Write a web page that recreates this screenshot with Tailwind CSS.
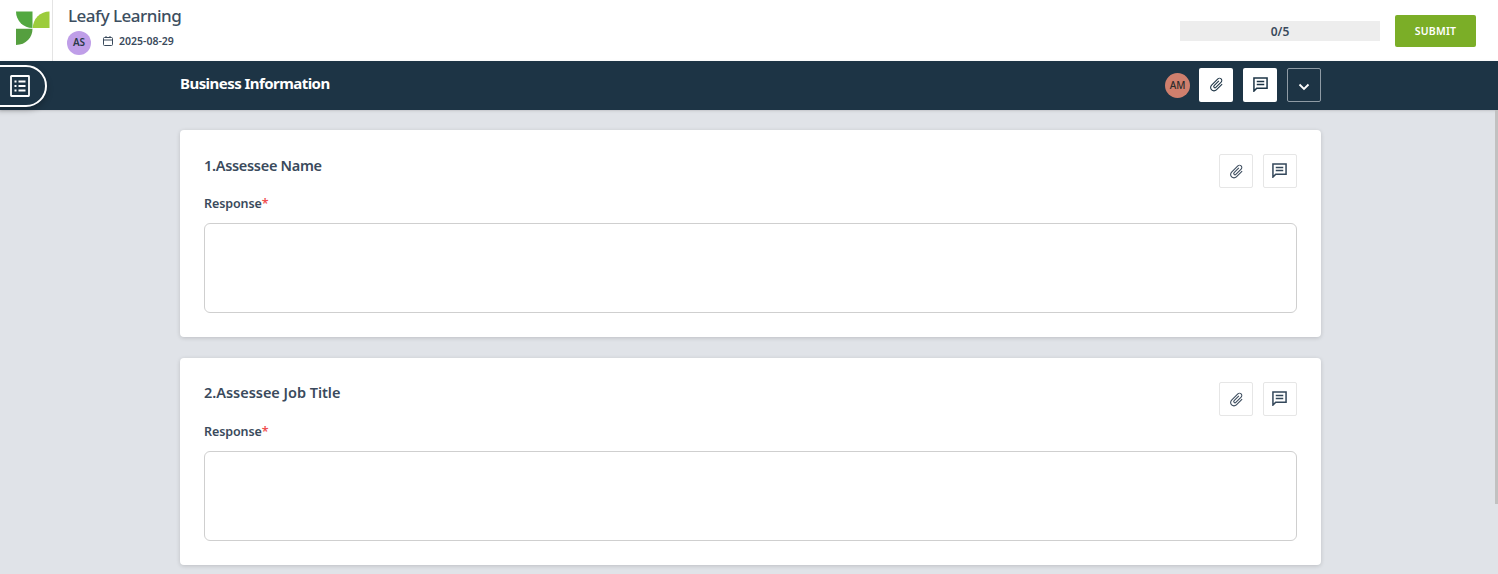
<!DOCTYPE html>
<html><head><meta charset="utf-8"><script src="https://cdn.jsdelivr.net/npm/@tailwindcss/browser@4"></script></head>
<body class="m-0">
<div class="w-[1498px] h-[574px] overflow-hidden flex flex-col bg-[#e0e3e8] font-['Noto_Sans',sans-serif] text-[#3a4a5c]">
  <header class="h-[61px] shrink-0 bg-white flex items-center">
    <div class="w-[53px] h-[61px] border-r border-[#e4e4e4] flex items-start pl-4 pt-[11px]">
      <svg width="34" height="34" viewBox="0 0 34 34">
        <path d="M0 0.500H16.500V17A16.500 16.500 0 0 1 0 0.500Z" fill="#52a840"/>
        <path d="M33.500 0.500V17H16.800A16.700 16.500 0 0 1 33.500 0.500Z" fill="#9ccc3c"/>
        <path d="M0 17.800H16.500C16.500 26.500 10 34 0 34Z" fill="#559f3f"/>
      </svg>
    </div>
    <div class="ml-[14px] flex flex-col">
      <div class="text-[17px] leading-[22px] font-medium tracking-[-0.5px] mt-[-2px] ml-px text-[#3c4e60]">Leafy Learning</div>
      <div class="flex items-center mt-[4px]">
        <div class="w-6 h-6 rounded-full bg-[#bf9ee8] flex items-center justify-center text-[10px] font-semibold text-[#2b3a4a]">AS</div>
        <svg width="12" height="12" viewBox="0 0 12 12" fill="none" stroke="#3a4a5c" stroke-width="1" class="ml-[11px] mt-[-4px]"><rect x="1.500" y="2.500" width="9" height="8" rx="1"/><path d="M1.500 5H10.500M4 1V3M8 1V3"/></svg>
        <div class="ml-[5px] text-[10.500px] font-semibold mt-[-2px]">2025-08-29</div>
      </div>
    </div>
    <div class="ml-auto mr-[22px] flex items-center gap-[15px]">
      <div class="w-[200px] h-5 bg-[#ededed] flex items-center justify-center text-xs font-semibold pt-[2px]">0/5</div>
      <div class="w-[81px] h-8 rounded-[2px] bg-[#7bae27] text-white text-[10.500px] font-semibold flex items-center justify-center tracking-[0.2px] pt-[2px]">SUBMIT</div>
    </div>
  </header>
  <nav class="h-[49px] shrink-0 bg-[#1d3445] relative flex items-center pl-[180px] pr-[177px] shadow-sm">
    <div class="absolute left-[-10px] top-[4px] w-[57px] h-[42px] rounded-r-[21px] border-2 border-white flex items-center justify-center pl-[2px] shadow-[0_3px_6px_rgba(0,0,0,0.25)]">
      <svg width="20" height="22" viewBox="0 0 20 22" fill="none" stroke="white"><rect x="1" y="1" width="18" height="20" rx="0.500" stroke-width="1.800"/><path d="M4.500 6.500H6.500M8.500 6.500H15.500M4.500 11H6.500M8.500 11H15.500M4.500 15.500H6.500M8.500 15.500H15.500" stroke-width="1.800"/></svg>
    </div>
    <div class="text-white text-[15px] font-bold tracking-[-0.55px] mt-[-5px]">Business Information</div>
    <div class="ml-auto flex items-center mt-[-2px]">
      <div class="w-[25px] h-[25px] rounded-full bg-[#cf7f6d] flex items-center justify-center text-[10px] font-medium text-[#2b2b2b] mr-[9px] mt-[2px]">AM</div>
      <div class="w-[34px] h-[34px] bg-white rounded-[2px] flex items-center justify-center mr-[10px]">
        <svg width="17" height="17" viewBox="0 0 24 24" fill="#1d3445"><path transform="rotate(45 12 12)" d="M16.500 6v11.500c0 2.210-1.790 4-4 4s-4-1.790-4-4V5a2.500 2.500 0 0 1 5 0v10.500c0 .55-.45 1-1 1s-1-.45-1-1V6H10v9.500a2.500 2.500 0 0 0 5 0V5c0-2.210-1.790-4-4-4S7 2.790 7 5v12.500c0 3.040 2.460 5.500 5.500 5.500s5.500-2.460 5.500-5.500V6h-1.500z"/></svg>
      </div>
      <div class="w-[34px] h-[34px] bg-white rounded-[2px] flex items-center justify-center mr-[10px]">
        <svg width="15" height="15" viewBox="0 0 16 16" fill="none" stroke="#1d3445" stroke-width="1.600" class="mt-[-1px]"><path d="M1 1H15V12H4L1 15Z"/><path d="M4 4.700H12M4 8H12"/></svg>
      </div>
      <div class="w-[34px] h-[34px] border border-[#8f9ba5] rounded-[2px] flex items-center justify-center">
        <svg width="12" height="12" viewBox="0 0 12 12" fill="none" stroke="white" stroke-width="1.800" class="mt-[4px]"><path d="M1.500 3.500 6 8l4.500-4.500"/></svg>
      </div>
    </div>
  </nav>
  <main class="relative flex-1 overflow-hidden pt-5 pl-[180px] flex flex-col gap-[21px]">
    <div class="absolute right-0 top-0 w-[3px] h-[394px] bg-[#c1c1c1]"></div>
    <section class="w-[1141px] h-[207px] shrink-0 bg-white rounded-[4px] shadow-[0_1px_4px_rgba(0,0,0,0.16)] px-6 pt-6">
      <div class="flex justify-between items-start h-[35px]">
        <div class="text-[14.500px] font-semibold leading-[24px] mt-[-1px] tracking-[-0.3px]">1.Assessee Name</div>
        <div class="flex gap-[10px]">
          <div class="w-[34px] h-[34px] border border-[#e6e6e6] rounded-[2px] flex items-center justify-center">
            <svg width="17" height="17" viewBox="0 0 24 24" fill="#3a4a5c"><path transform="rotate(45 12 12)" d="M16.500 6v11.500c0 2.210-1.790 4-4 4s-4-1.790-4-4V5a2.500 2.500 0 0 1 5 0v10.500c0 .55-.45 1-1 1s-1-.45-1-1V6H10v9.500a2.500 2.500 0 0 0 5 0V5c0-2.210-1.790-4-4-4S7 2.790 7 5v12.500c0 3.040 2.460 5.500 5.500 5.500s5.500-2.460 5.500-5.500V6h-1.500z"/></svg>
          </div>
          <div class="w-[34px] h-[34px] border border-[#e6e6e6] rounded-[2px] flex items-center justify-center">
            <svg width="15" height="15" viewBox="0 0 16 16" fill="none" stroke="#33475a" stroke-width="1.600" class="mt-[-2px] ml-[-2px]"><path d="M1 1H15V12H4L1 15Z"/><path d="M4 4.700H12M4 8H12"/></svg>
          </div>
        </div>
      </div>
      <div class="text-[12.500px] font-semibold leading-[18px] mt-[6px] tracking-[-0.1px]">Response<span class="text-[#f05050]">*</span></div>
      <div class="mt-[10px] h-[90px] border border-[#cfcfcf] rounded-[6px]"></div>
    </section>
    <section class="w-[1141px] h-[207px] shrink-0 bg-white rounded-[4px] shadow-[0_1px_4px_rgba(0,0,0,0.16)] px-6 pt-6">
      <div class="flex justify-between items-start h-[35px]">
        <div class="text-[14.500px] font-semibold leading-[24px] mt-[-2px] tracking-[-0.03px]">2.Assessee Job Title</div>
        <div class="flex gap-[10px]">
          <div class="w-[34px] h-[34px] border border-[#e6e6e6] rounded-[2px] flex items-center justify-center">
            <svg width="17" height="17" viewBox="0 0 24 24" fill="#3a4a5c"><path transform="rotate(45 12 12)" d="M16.500 6v11.500c0 2.210-1.790 4-4 4s-4-1.790-4-4V5a2.500 2.500 0 0 1 5 0v10.500c0 .55-.45 1-1 1s-1-.45-1-1V6H10v9.500a2.500 2.500 0 0 0 5 0V5c0-2.210-1.790-4-4-4S7 2.790 7 5v12.500c0 3.040 2.460 5.500 5.500 5.500s5.500-2.460 5.500-5.500V6h-1.500z"/></svg>
          </div>
          <div class="w-[34px] h-[34px] border border-[#e6e6e6] rounded-[2px] flex items-center justify-center">
            <svg width="15" height="15" viewBox="0 0 16 16" fill="none" stroke="#33475a" stroke-width="1.600" class="mt-[-2px] ml-[-2px]"><path d="M1 1H15V12H4L1 15Z"/><path d="M4 4.700H12M4 8H12"/></svg>
          </div>
        </div>
      </div>
      <div class="text-[12.500px] font-semibold leading-[18px] mt-[6px] tracking-[-0.1px]">Response<span class="text-[#f05050]">*</span></div>
      <div class="mt-[10px] h-[90px] border border-[#cfcfcf] rounded-[6px]"></div>
    </section>
  </main>
</div>
</body></html>
